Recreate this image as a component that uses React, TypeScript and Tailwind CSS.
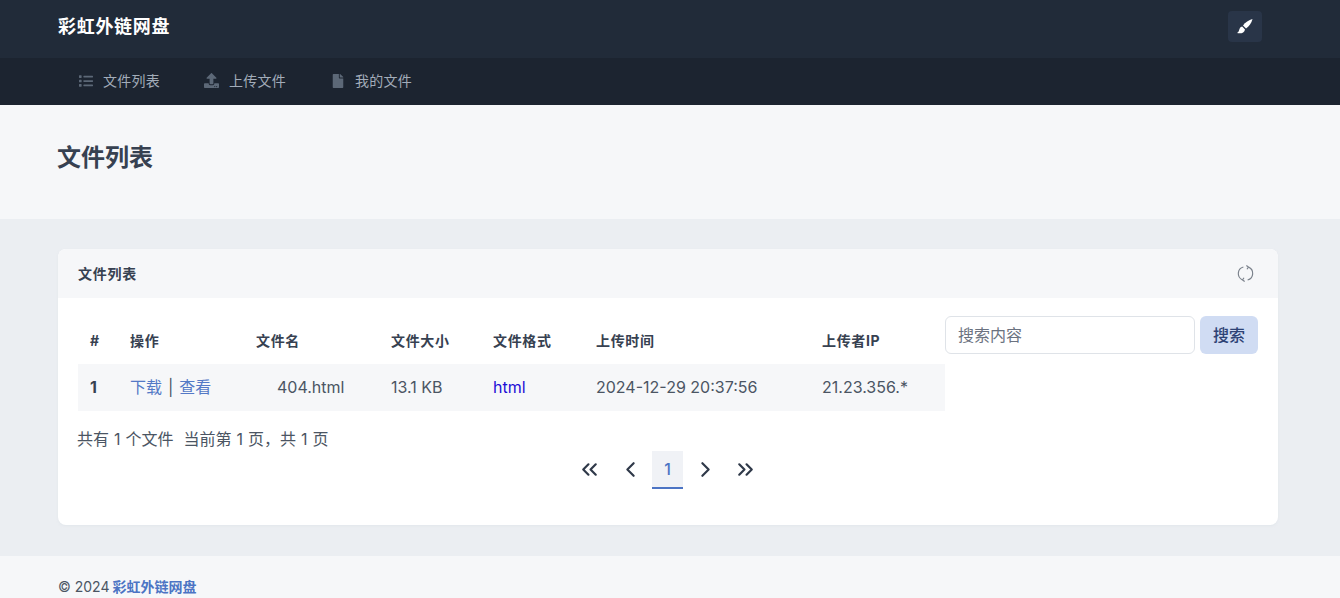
import { FaFile, FaList, FaUpload } from "react-icons/fa";
import { ChevronLeft, ChevronRight, ChevronsLeft, ChevronsRight } from "lucide-react";

const FONT = "font-['Inter','Noto_Sans_CJK_SC',sans-serif]";

const navItems = [
  { label: "文件列表", icon: <FaList className="w-[14px] h-[14px]" /> },
  { label: "上传文件", icon: <FaUpload className="w-[15px] h-[15px]" /> },
  { label: "我的文件", icon: <FaFile className="w-[12px] h-[14px]" /> },
];

const columns = [
  { label: "#", width: "w-[40px]" },
  { label: "操作", width: "w-[126px]" },
  { label: "文件名", width: "w-[135px]" },
  { label: "文件大小", width: "w-[102px]" },
  { label: "文件格式", width: "w-[103px]" },
  { label: "上传时间", width: "w-[226px]" },
  { label: "上传者IP", width: "w-[135px]" },
];

function BrushIcon() {
  return (
    <svg viewBox="0 0 16 16" className="w-[16px] h-[16px]" fill="currentColor">
      <path d="M15.5 1C12 2 8 4.5 6 7.5L9 10.5C12 8.5 14.5 5 15.5 1Z" />
      <path d="M5.2 8.6C3 9 2.5 11 2 12.5C1.7 13.8 1 14.5 0 15C3 15.8 7.5 15.5 8 11.5Z" />
    </svg>
  );
}

function RefreshIcon() {
  return (
    <svg viewBox="0 0 16 16" className="w-[17px] h-[17px] text-[#7b828c]" fill="none" stroke="currentColor" strokeWidth="1.1">
      <path d="M6 1.9A6.4 6.4 0 0 0 5.2 14" />
      <path d="M10 14.1A6.4 6.4 0 0 0 10.8 2" />
      <path d="M8.8 0.4 10.8 2 9.4 4" />
      <path d="M7.2 15.6 5.2 14 6.6 12" />
    </svg>
  );
}

export default function App() {
  return (
    <div className={`${FONT} w-[1340px] h-[598px] overflow-hidden bg-[#ebeef2] text-[#374151] text-[16px]`}>
      <header className="h-[58px] bg-[#212b39] flex items-center justify-between pl-[58px] pr-[78px]">
        <span className="text-[18px] font-bold tracking-[0.7px] text-white relative -top-[3px]">彩虹外链网盘</span>
        <button className="w-[34px] h-[31px] rounded-[4px] bg-[#293548] flex items-center justify-center text-white relative -top-[3px]">
          <BrushIcon />
        </button>
      </header>

      <nav className="h-[47px] bg-[#1c2430] flex items-center pl-[78px] pb-[2px] gap-[44px]">
        {navItems.map((item) => (
          <a key={item.label} className="flex items-center gap-[10px] text-[14px] tracking-[0.25px] text-[#a2acb9]">
            <span className="w-[15px] flex justify-center text-[#5c6877]">{item.icon}</span>
            {item.label}
          </a>
        ))}
      </nav>

      <section className="h-[114px] bg-[#f6f7f9] flex items-center pl-[57px]">
        <h1 className="text-[24px] font-bold text-[#374151] relative -top-[4px]">文件列表</h1>
      </section>

      <main className="h-[337px] pl-[58px] pr-[62px] pt-[30px]">
        <div className="h-[276px] bg-white rounded-[8px] overflow-hidden shadow-[0_1px_2px_rgba(220,225,232,0.5)]">
          <div className="h-[49px] bg-[#f6f7f9] flex items-center justify-between pl-[20px] pr-[24px]">
            <h3 className="text-[14px] font-semibold tracking-[0.75px] text-[#374151]">文件列表</h3>
            <RefreshIcon />
          </div>

          <div className="px-[20px] pt-[18px]">
            <div className="flex items-start">
              <table className="w-[867px] table-fixed border-collapse">
                <thead>
                  <tr className="h-[48px]">
                    {columns.map((col) => (
                      <th key={col.label} className={`${col.width} px-[12px] text-left text-[14px] font-bold tracking-[0.65px] text-[#374151]`}>
                        {col.label}
                      </th>
                    ))}
                  </tr>
                </thead>
                <tbody>
                  <tr className="h-[47px] bg-[#f6f7f9] text-[16px] text-[#4b5563]">
                    <td className="px-[12px] pb-[2px] font-bold text-[#374151]">1</td>
                    <td className="px-[12px] pb-[2px] whitespace-nowrap">
                      <a className="text-[#5479c6]">下载</a><span className="mx-[6px] text-[#4b5563]">|</span><a className="text-[#5479c6]">查看</a>
                    </td>
                    <td className="pl-[33px] pr-[12px] pb-[2px] whitespace-nowrap">404.html</td>
                    <td className="px-[12px] pb-[2px] whitespace-nowrap">13.1 KB</td>
                    <td className="px-[12px] pb-[2px]"><a className="text-[#1d0fd6]">html</a></td>
                    <td className="px-[12px] pb-[2px] whitespace-nowrap">2024-12-29 20:37:56</td>
                    <td className="px-[12px] pb-[2px] whitespace-nowrap">21.23.356.*</td>
                  </tr>
                </tbody>
              </table>

              <form className="flex gap-[5px]">
                <input
                  placeholder="搜索内容"
                  className="w-[250px] h-[38px] px-[12px] rounded-[6px] border border-[#dfe3e8] bg-white text-[16px] outline-none placeholder:text-[#6b7280]"
                />
                <button type="button" className="w-[58px] h-[38px] rounded-[6px] bg-[#d0dcf3] text-[16px] font-medium text-[#2d4275]">
                  搜索
                </button>
              </form>
            </div>

            <div className="mt-[16px] -ml-[1px] h-[24px] leading-[24px] whitespace-pre text-[16px] [word-spacing:0.5px] text-[#4b5563]">共有 1 个文件  当前第 1 页，共 1 页</div>

            <div className="flex justify-center items-center h-[38px] text-[#2f3949]">
              <span className="w-[38px] flex justify-center pb-[2px]"><ChevronsLeft size={25} strokeWidth={2.1} /></span>
              <span className="w-[44px] flex justify-center pb-[2px]"><ChevronLeft size={25} strokeWidth={2.1} /></span>
              <span className="w-[31px] h-[38px] flex items-center justify-center bg-[#f0f2f6] border-b-2 border-[#4c74c4] text-[#4c74c4] font-medium">1</span>
              <span className="w-[44px] flex justify-center pb-[2px]"><ChevronRight size={25} strokeWidth={2.1} /></span>
              <span className="w-[39px] pr-[3px] flex justify-center pb-[2px]"><ChevronsRight size={25} strokeWidth={2.1} /></span>
            </div>
          </div>
        </div>
      </main>

      <footer className="h-[42px] bg-[#f6f7f9] pl-[58px] pt-[21px] text-[14px] leading-[20px] text-[#4b5563] whitespace-nowrap">
        © 2024 <a className="-ml-[1px] font-semibold text-[#4c74c4]">彩虹外链网盘</a>
      </footer>
    </div>
  );
}
